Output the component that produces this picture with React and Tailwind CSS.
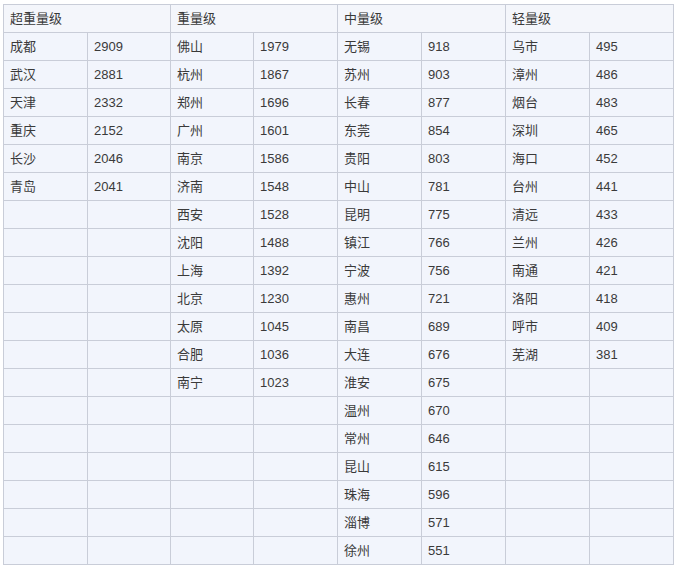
const groups = [
  {
    title: "超重量级",
    rows: [
      ["成都", 2909],
      ["武汉", 2881],
      ["天津", 2332],
      ["重庆", 2152],
      ["长沙", 2046],
      ["青岛", 2041],
    ],
  },
  {
    title: "重量级",
    rows: [
      ["佛山", 1979],
      ["杭州", 1867],
      ["郑州", 1696],
      ["广州", 1601],
      ["南京", 1586],
      ["济南", 1548],
      ["西安", 1528],
      ["沈阳", 1488],
      ["上海", 1392],
      ["北京", 1230],
      ["太原", 1045],
      ["合肥", 1036],
      ["南宁", 1023],
    ],
  },
  {
    title: "中量级",
    rows: [
      ["无锡", 918],
      ["苏州", 903],
      ["长春", 877],
      ["东莞", 854],
      ["贵阳", 803],
      ["中山", 781],
      ["昆明", 775],
      ["镇江", 766],
      ["宁波", 756],
      ["惠州", 721],
      ["南昌", 689],
      ["大连", 676],
      ["淮安", 675],
      ["温州", 670],
      ["常州", 646],
      ["昆山", 615],
      ["珠海", 596],
      ["淄博", 571],
      ["徐州", 551],
    ],
  },
  {
    title: "轻量级",
    rows: [
      ["乌市", 495],
      ["漳州", 486],
      ["烟台", 483],
      ["深圳", 465],
      ["海口", 452],
      ["台州", 441],
      ["清远", 433],
      ["兰州", 426],
      ["南通", 421],
      ["洛阳", 418],
      ["呼市", 409],
      ["芜湖", 381],
    ],
  },
];

const ROWS = 19;

export default function App() {
  return (
    <div
      className="bg-white w-[676px] h-[569px] pt-[4px] pl-[3px] text-[13px] text-[#3a3a3a]"
      style={{ fontFamily: '"Liberation Sans", "Noto Sans CJK SC", sans-serif' }}
    >
      <table className="w-[671px] table-fixed border-collapse bg-[#f2f5fc]">
        <colgroup>
          <col className="w-[84px]" />
          <col className="w-[83px]" />
          <col className="w-[83px]" />
          <col className="w-[84px]" />
          <col className="w-[84px]" />
          <col className="w-[84px]" />
          <col className="w-[84px]" />
          <col className="w-[84px]" />
        </colgroup>
        <thead>
          <tr className="h-[28px]">
            {groups.map((g) => (
              <th
                key={g.title}
                colSpan={2}
                className="border border-[#c9cdd8] px-[6px] text-left font-normal bg-[#f4f6fb]"
              >
                {g.title}
              </th>
            ))}
          </tr>
        </thead>
        <tbody>
          {Array.from({ length: ROWS }).map((_, r) => (
            <tr key={r} className="h-[28px]">
              {groups.map((g) => {
                const row = g.rows[r];
                return [
                  <td
                    key={g.title + "n"}
                    className="border border-[#c9cdd8] px-[6px] p-0"
                  >
                    {row ? row[0] : ""}
                  </td>,
                  <td
                    key={g.title + "v"}
                    className="border border-[#c9cdd8] px-[6px] p-0"
                  >
                    {row ? row[1] : ""}
                  </td>,
                ];
              })}
            </tr>
          ))}
        </tbody>
      </table>
    </div>
  );
}
